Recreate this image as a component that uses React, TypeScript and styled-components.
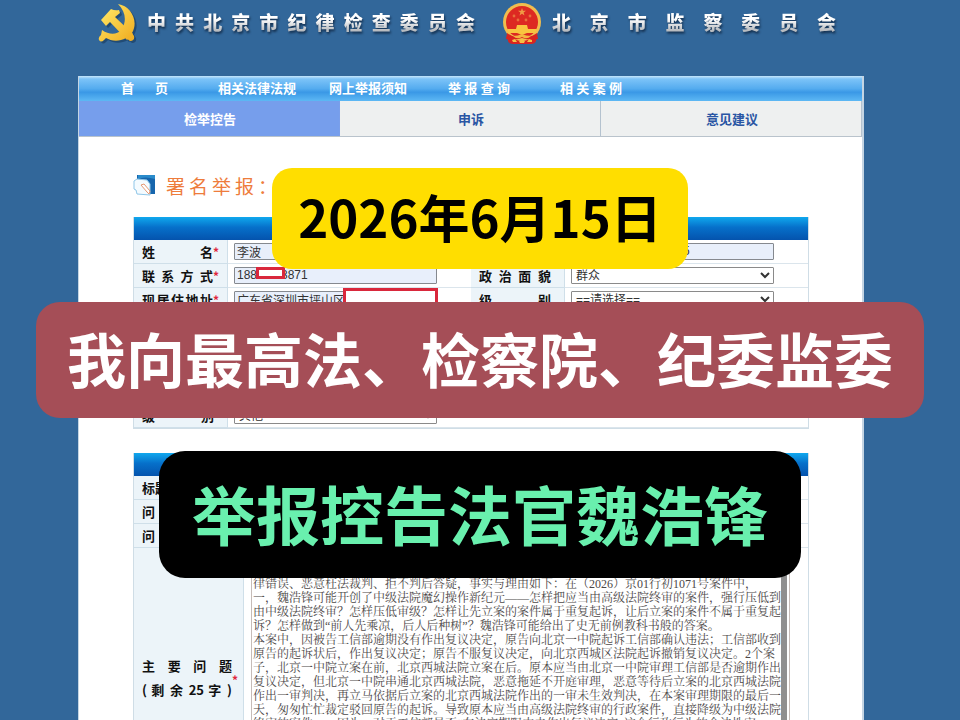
import React from "react";
import styled, { createGlobalStyle } from "styled-components";

const sans = `"Liberation Sans", "Noto Sans CJK SC", sans-serif`;
const cjk = `"Noto Sans CJK SC", sans-serif`;

const GlobalStyle = createGlobalStyle`
  *, *::before, *::after { box-sizing: border-box; }
  body { margin: 0; background: #32679a; font-family: ${cjk}; color: #111; }
  input, select, textarea, button { font: inherit; margin: 0; }
`;

const Screen = styled.div`
  position: relative;
  height: 100vh;
  overflow: hidden;
  padding: 0 96px 0 78px;
  background: #32679a;
`;

const Header = styled.header`
  display: flex;
  align-items: flex-start;
  height: 76px;
  padding: 2px 0 0 18px;
`;

const Emblem = styled.svg`
  flex: none;
  width: 42px;
  height: 42px;
`;

const OrgName = styled.h1<{ $width: number; $after: number }>`
  flex: none;
  width: ${(p) => p.$width}px;
  margin: 6px ${(p) => p.$after}px 0 9px;
  font-size: 19px;
  line-height: 28px;
  font-weight: 900;
  text-align: justify;
  text-align-last: justify;
  color: transparent;
  background: linear-gradient(#ffffff 40%, #b9bcc0 80%);
  background-clip: text;
  filter: drop-shadow(1px 2px 1px rgba(10, 30, 55, 0.75));
`;

const Sheet = styled.main`
  background: #fff;
  border: solid #c5d5e3;
  border-width: 0 2px 0 1px;
  min-height: 100vh;
`;

const Nav = styled.nav`
  display: grid;
  grid-template-columns: 97px 111px 119px 112px 1fr;
  align-items: center;
  height: 25px;
  padding: 0 0 2px 42px;
  background: linear-gradient(#c6e6fb 0, #7cc3f8 3px, #55acef 50%, #3a98e6 65%, #5db8f4 100%);
`;

const NavLink = styled.a<{ $width: number }>`
  width: ${(p) => p.$width}px;
  font-size: 13px;
  line-height: 20px;
  font-weight: 700;
  color: #fff;
  text-decoration: none;
  white-space: nowrap;
  text-align-last: justify;
`;

const Tabs = styled.div`
  display: grid;
  grid-template-columns: repeat(3, 1fr);
  height: 36px;
  border-bottom: 1px solid #b9c3cc;
`;

const Tab = styled.button<{ $active?: boolean }>`
  border: 0;
  border-right: 1px solid ${(p) => (p.$active ? "#7a9fea" : "#b4c2cf")};
  padding: 0 0 1px 2px;
  background: ${(p) => (p.$active ? "#769eec" : "#eef0f0")};
  color: ${(p) => (p.$active ? "#fff" : "#2a56a4")};
  font-size: 13px;
  font-weight: 700;
`;

const Body = styled.div`
  padding: 34px 53px 0 54px;
`;

const Title = styled.h2`
  display: flex;
  align-items: center;
  gap: 10px;
  height: 28px;
  margin: 0 0 18px;
  font-size: 19px;
  font-weight: 400;
  letter-spacing: 4px;
  color: #ee7c3c;
`;

const NoteIcon = styled.svg`
  width: 23px;
  height: 24px;
`;

const FormTable = styled.table`
  width: 100%;
  border-collapse: separate;
  border-spacing: 0;
  table-layout: fixed;
  border: 1px solid #cfdde6;
  border-top: 0;
  & + & { margin-top: 24px; }
`;

const Bar = styled.th`
  height: 23px;
  padding: 0;
  background: linear-gradient(#10a8ee, #0670ca 45%, #0453ad);
`;

const Col = styled.col<{ $width?: number }>`
  width: ${(p) => (p.$width ? p.$width + "px" : "auto")};
`;

const LabelCell = styled.th`
  height: 24px;
  padding: 0 8px;
  background: #ecf4f9;
  border: solid #cfdfe9;
  border-width: 0 1px 1px 0;
  text-align: left;
`;

const ValueCell = styled.td`
  height: 24px;
  padding: 0 6px;
  border-bottom: 1px solid #dbe5ec;
`;

const HiddenRowsCell = styled.td`
  height: 92px;
`;

const FieldLabel = styled.label`
  display: flex;
  font-size: 13px;
  line-height: 20px;
  font-weight: 700;
`;

const Spread = styled.span<{ $width: number }>`
  display: block;
  width: ${(p) => p.$width}px;
  white-space: nowrap;
  text-align-last: justify;
`;

const Star = styled.span`
  color: #e0263c;
  font-size: 12px;
  line-height: 20px;
`;

const CornerStar = styled(Star)`
  align-self: flex-end;
  line-height: 44px;
`;

const FieldWrap = styled.div`
  position: relative;
  width: 203px;
`;

const TextInput = styled.input<{ $tail?: boolean }>`
  display: block;
  width: 100%;
  height: 17px;
  border: 1px solid #85898f;
  border-radius: 1px;
  padding: 0 2px 1px;
  text-indent: ${(p) => (p.$tail ? "109px" : "0")};
  background: #e8effb;
  font-family: ${sans};
  font-size: 12px;
  line-height: 14px;
  color: #333;
`;

const Choice = styled.select`
  display: block;
  width: 100%;
  height: 17px;
  border: 1px solid #8a8a8a;
  border-radius: 1px;
  padding: 0;
  background: #fff;
  font-family: ${sans};
  font-size: 12px;
  line-height: 15px;
  color: #333;
`;

const Redaction = styled.span<{ $left: number; $top: number; $width: number; $height: number }>`
  position: absolute;
  left: ${(p) => p.$left}px;
  top: ${(p) => p.$top}px;
  width: ${(p) => p.$width}px;
  height: ${(p) => p.$height}px;
  border: 3px solid #d9283c;
  background: #fff;
`;

const ProblemLabelCell = styled(LabelCell)`
  height: 260px;
  vertical-align: middle;
`;

const ProblemLabel = styled(FieldLabel)`
  line-height: 24px;
  align-items: center;
`;

const ProblemCell = styled.td`
  padding: 0 18px 0 7px;
  vertical-align: top;
`;

const ProblemBox = styled.div`
  display: flex;
  height: 260px;
  border: solid #c6bcb8;
  border-width: 0 1px 0 1px;
`;

const ProblemText = styled.textarea`
  flex: 1;
  min-width: 0;
  border: 0;
  padding: 1px 0 0 1px;
  resize: none;
  overflow: hidden;
  white-space: pre;
  background: #fff;
  color: #4c4848;
  font-family: "Liberation Serif", "Noto Serif CJK SC", "Noto Sans CJK SC", serif;
  font-size: 12px;
  line-height: 14px;
`;

const Track = styled.div`
  flex: none;
  width: 6px;
  margin-right: 2px;
  background: #8f8f8f;
`;

const Captions = styled.div`
  position: absolute;
  inset: 0;
  display: flex;
  flex-direction: column;
  align-items: center;
  gap: 33px;
  padding-top: 168px;
  pointer-events: none;
`;

const Caption = styled.p<{ $bg: string; $fg: string; $size: number; $line: number; $pad: number; $radius: number }>`
  margin: 0;
  padding: 0 ${(p) => p.$pad}px 4px;
  border-radius: ${(p) => p.$radius}px;
  background: ${(p) => p.$bg};
  color: ${(p) => p.$fg};
  font-size: ${(p) => p.$size}px;
  line-height: ${(p) => p.$line}px;
  font-weight: 700;
  white-space: nowrap;
`;

const problem = [
  "",
  "",
  "律错误、恶意枉法裁判、拒不判后答疑，事实与理由如下：在（2026）京01行初1071号案件中，",
  "一，魏浩锋可能开创了中级法院魔幻操作新纪元——怎样把应当由高级法院终审的案件，强行压低到",
  "由中级法院终审？怎样压低审级？怎样让先立案的案件属于重复起诉，让后立案的案件不属于重复起",
  "诉？怎样做到“前人先乘凉，后人后种树”？魏浩锋可能给出了史无前例教科书般的答案。",
  "本案中，因被告工信部逾期没有作出复议决定，原告向北京一中院起诉工信部确认违法；工信部收到",
  "原告的起诉状后，作出复议决定；原告不服复议决定，向北京西城区法院起诉撤销复议决定。2个案",
  "子，北京一中院立案在前，北京西城法院立案在后。原本应当由北京一中院审理工信部是否逾期作出",
  "复议决定，但北京一中院串通北京西城法院，恶意拖延不开庭审理，恶意等待后立案的北京西城法院",
  "作出一审判决，再立马依据后立案的北京西城法院作出的一审未生效判决，在本案审理期限的最后一",
  "天，匆匆忙忙裁定驳回原告的起诉。导致原本应当由高级法院终审的行政案件，直接降级为中级法院",
  "终审的案件，一因为，对于工信部是否“在法定期限内未作出复议决定”这个行政行为的合法性审，",
].join("\n");

function PartyEmblem() {
  return (
    <Emblem viewBox="0 0 42 42" aria-hidden="true">
      <defs>
        <linearGradient id="gold" x1="0" y1="0" x2="1" y2="1">
          <stop offset="0" stopColor="#ffe765" />
          <stop offset="1" stopColor="#f0ac20" />
        </linearGradient>
        <g id="hammer-sickle">
          <path d="M22 2C35 4 43 19 36 31L38 34Q39 39 34 39L30 36C23 40 15 39 10 36L8 38Q5 41 3 38Q2 35 5 33L6 28C13 33 21 33 25 28C31 20 30 10 22 2Z" />
          <path d="M5 18L15 7Q19 9 23 8L24 11L19 15L37 32L31 38L14 20L10 24Z" />
        </g>
      </defs>
      <use href="#hammer-sickle" x="2" y="2" fill="#17395d" opacity="0.6" />
      <use href="#hammer-sickle" fill="url(#gold)" />
    </Emblem>
  );
}

function NationalEmblem() {
  return (
    <Emblem viewBox="0 0 42 42" aria-hidden="true">
      <path d="M6 27L7 39Q8 42 12 42H30Q34 42 35 39L37 27Z" fill="#d92420" />
      <circle cx="21" cy="20" r="19" fill="#f1bd4e" />
      <circle cx="21" cy="20" r="16" fill="#dd2922" />
      <path d="M21 6l1 2.8h3l-2.4 1.8 .9 2.9-2.5-1.7-2.5 1.7 .9-2.9-2.4-1.8h3z" fill="#f09a45" />
      <g fill="#e8703c">
        <circle cx="13" cy="14" r="1.4" />
        <circle cx="17" cy="18" r="1.4" />
        <circle cx="25" cy="18" r="1.4" />
        <circle cx="29" cy="14" r="1.4" />
      </g>
      <path d="M16 23H26L27 27H36L34 31L26 31L21 33L16 31L8 31L6 27H15Z" fill="#f9c53f" />
      <path d="M6 31Q14 37 21 33Q28 37 36 31L37 37Q29 39 21 36Q13 39 5 37Z" fill="#d92420" />
      <path d="M12 34Q17 34 21 32Q25 34 30 34Q26 38 21 35Q16 38 12 34Z" fill="#f4b640" />
      <path d="M11 38L14 37L16 40H12ZM18 39L21 37L24 39L23 41H19ZM26 40L28 37L31 38V40Z" fill="#f6c044" />
    </Emblem>
  );
}

type LabelProps = { htmlFor: string; text: string; required?: boolean };

function RowLabel({ htmlFor, text, required }: LabelProps) {
  return (
    <LabelCell scope="row">
      <FieldLabel htmlFor={htmlFor}>
        <Spread $width={72}>{text}</Spread>
        {required && <Star>*</Star>}
      </FieldLabel>
    </LabelCell>
  );
}

export default function App() {
  return (
    <>
      <GlobalStyle />
      <Screen>
        <Header>
          <PartyEmblem />
          <OrgName $width={328} $after={26}>中共北京市纪律检查委员会</OrgName>
          <NationalEmblem />
          <OrgName $width={284} $after={0}>北京市监察委员会</OrgName>
        </Header>
        <Sheet>
          <Nav>
            <NavLink href="#home" $width={47}>首页</NavLink>
            <NavLink href="#laws" $width={78}>相关法律法规</NavLink>
            <NavLink href="#notice" $width={78}>网上举报须知</NavLink>
            <NavLink href="#query" $width={62}>举报查询</NavLink>
            <NavLink href="#cases" $width={62}>相关案例</NavLink>
          </Nav>
          <Tabs>
            <Tab type="button" $active>检举控告</Tab>
            <Tab type="button">申诉</Tab>
            <Tab type="button">意见建议</Tab>
          </Tabs>
          <Body>
            <Title>
              <NoteIcon viewBox="0 0 23 24" aria-hidden="true">
                <path d="M4 2H22V21H16L4 8Z" fill="#1766ad" />
                <path d="M5 2H22V6Q12 3 5 6Z" fill="#2a8bcb" />
                <path d="M1 8L4 6L14 7L17 11V22L4 21L3 17L1 16Z" fill="#f4fbff" stroke="#8fc6e8" />
                <path d="M8 12L11 11L17 18L16 21L14 19Z" fill="#fff" stroke="#e59873" />
              </NoteIcon>
              署名举报：
            </Title>
            <FormTable>
              <colgroup>
                <Col $width={94} />
                <Col />
                <Col $width={94} />
                <Col />
              </colgroup>
              <thead>
                <tr><Bar colSpan={4} /></tr>
              </thead>
              <tbody>
                <tr>
                  <RowLabel htmlFor="name" text="姓名" required />
                  <ValueCell><FieldWrap><TextInput id="name" defaultValue="李波" /></FieldWrap></ValueCell>
                  <LabelCell />
                  <ValueCell><FieldWrap><TextInput aria-label="证件" $tail defaultValue="5" /></FieldWrap></ValueCell>
                </tr>
                <tr>
                  <RowLabel htmlFor="phone" text="联系方式" required />
                  <ValueCell>
                    <FieldWrap>
                      <TextInput id="phone" defaultValue={"188\u2003\u20033871"} />
                      <Redaction $left={22} $top={0} $width={29} $height={12} />
                    </FieldWrap>
                  </ValueCell>
                  <RowLabel htmlFor="politics" text="政治面貌" />
                  <ValueCell><FieldWrap><Choice id="politics"><option>群众</option></Choice></FieldWrap></ValueCell>
                </tr>
                <tr>
                  <RowLabel htmlFor="address" text="现居住地址" required />
                  <ValueCell>
                    <FieldWrap>
                      <TextInput id="address" defaultValue="广东省深圳市坪山区" />
                      <Redaction $left={109} $top={-3} $width={95} $height={20} />
                    </FieldWrap>
                  </ValueCell>
                  <RowLabel htmlFor="level" text="级别" />
                  <ValueCell><FieldWrap><Choice id="level"><option>==请选择==</option></Choice></FieldWrap></ValueCell>
                </tr>
                <tr><HiddenRowsCell colSpan={4} /></tr>
                <tr>
                  <RowLabel htmlFor="rank" text="级别" />
                  <ValueCell colSpan={3}><FieldWrap><Choice id="rank"><option>其他</option></Choice></FieldWrap></ValueCell>
                </tr>
              </tbody>
            </FormTable>
            <FormTable>
              <colgroup>
                <Col $width={110} />
                <Col />
              </colgroup>
              <thead>
                <tr><Bar colSpan={2} /></tr>
              </thead>
              <tbody>
                <tr>
                  <LabelCell scope="row"><FieldLabel as="span">标题</FieldLabel></LabelCell>
                  <ValueCell />
                </tr>
                <tr>
                  <LabelCell scope="row"><FieldLabel as="span">问</FieldLabel></LabelCell>
                  <ValueCell />
                </tr>
                <tr>
                  <LabelCell scope="row"><FieldLabel as="span">问</FieldLabel></LabelCell>
                  <ValueCell />
                </tr>
                <tr>
                  <ProblemLabelCell scope="row">
                    <ProblemLabel htmlFor="problem">
                      <span>
                        <Spread $width={90}>主要问题</Spread>
                        <Spread $width={90}>( 剩 余 25 字 )</Spread>
                      </span>
                      <CornerStar>*</CornerStar>
                    </ProblemLabel>
                  </ProblemLabelCell>
                  <ProblemCell>
                    <ProblemBox>
                      <ProblemText id="problem" defaultValue={problem} />
                      <Track />
                    </ProblemBox>
                  </ProblemCell>
                </tr>
              </tbody>
            </FormTable>
          </Body>
        </Sheet>
        <Captions>
          <Caption $bg="#ffde00" $fg="#000" $size={51} $line={97} $pad={26} $radius={20}>2026年6月15日</Caption>
          <Caption $bg="#a54e57" $fg="#fff" $size={59} $line={112} $pad={31} $radius={24}>我向最高法、检察院、纪委监委</Caption>
          <Caption $bg="#000" $fg="#69f0ae" $size={64} $line={123} $pad={33} $radius={26}>举报控告法官魏浩锋</Caption>
        </Captions>
      </Screen>
    </>
  );
}
